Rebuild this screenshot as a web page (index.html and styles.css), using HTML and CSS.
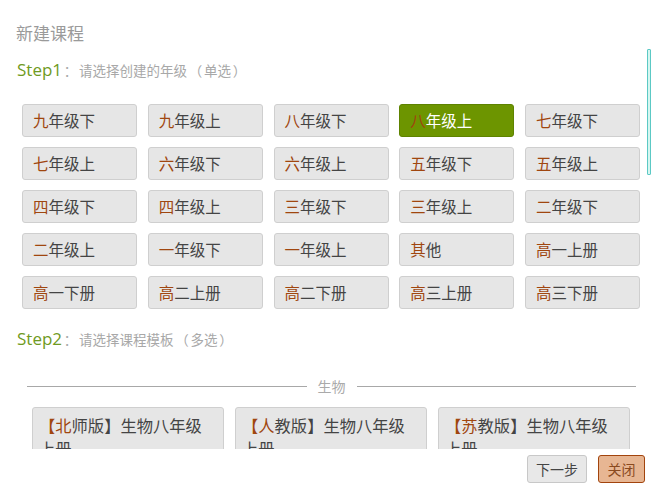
FILE: index.html
```html
<!DOCTYPE html>
<html lang="zh">
<head>
<meta charset="utf-8">
<title>新建课程</title>
<link rel="stylesheet" href="styles.css">
</head>
<body>
<div class="dialog">
  <div class="content">
    <div class="title">新建课程</div>
    <div class="step"><span class="step-no">Step1</span><span class="step-desc"><span class="pn">：</span>请选择创建的年级<span class="pn">（</span>单选<span class="pn">）</span></span></div>
    <div class="grades">
      <div class="grade">九年级下</div>
      <div class="grade">九年级上</div>
      <div class="grade">八年级下</div>
      <div class="grade selected">八年级上</div>
      <div class="grade">七年级下</div>
      <div class="grade">七年级上</div>
      <div class="grade">六年级下</div>
      <div class="grade">六年级上</div>
      <div class="grade">五年级下</div>
      <div class="grade">五年级上</div>
      <div class="grade">四年级下</div>
      <div class="grade">四年级上</div>
      <div class="grade">三年级下</div>
      <div class="grade">三年级上</div>
      <div class="grade">二年级下</div>
      <div class="grade">二年级上</div>
      <div class="grade">一年级下</div>
      <div class="grade">一年级上</div>
      <div class="grade">其他</div>
      <div class="grade">高一上册</div>
      <div class="grade">高一下册</div>
      <div class="grade">高二上册</div>
      <div class="grade">高二下册</div>
      <div class="grade">高三上册</div>
      <div class="grade">高三下册</div>
    </div>
    <div class="step step2"><span class="step-no">Step2</span><span class="step-desc"><span class="pn">：</span>请选择课程模板<span class="pn">（</span>多选<span class="pn">）</span></span></div>
    <div class="divider"><span class="divider-text">生物</span></div>
    <div class="cards">
      <div class="card">【北师版】生物八年级上册</div>
      <div class="card">【人教版】生物八年级上册</div>
      <div class="card">【苏教版】生物八年级上册</div>
    </div>
  </div>
  <div class="footer">
    <div class="btn">下一步</div>
    <div class="btn btn-close">关闭</div>
  </div>
  <div class="side-bar"></div>
</div>
</body>
</html>
```

FILE: styles.css
```css
* { box-sizing: border-box; }
html, body { margin: 0; padding: 0; background: #fff; }
body {
  font-family: "Noto Sans CJK SC", "Noto Sans", sans-serif;
  color: #333;
}
.dialog {
  position: relative;
  width: 668px;
  height: 491px;
}
.content {
  height: 449px;
  overflow: hidden;
  padding: 0 16px;
}
.title {
  padding-top: 21px;
  font-size: 17px;
  line-height: 24px;
  color: #9a9a9a;
}
.step {
  margin-top: 13px;
  height: 24px;
  line-height: 24px;
  padding-left: 1px;
  display: flex;
  align-items: baseline;
}
.step-no {
  font-family: "Open Sans", "Noto Sans", sans-serif;
  font-size: 17px;
  color: #6f9a22;
}
.step-desc {
  font-size: 13.5px;
  color: #a8a8a8;
}
.pn {
  display: inline-block;
  width: 17px;
  text-align: center;
}
.grades {
  margin-top: 22px;
  margin-left: 6px;
  display: grid;
  grid-template-columns: repeat(5, 115px);
  grid-auto-rows: 33px;
  column-gap: 10.75px;
  row-gap: 10px;
}
.grade {
  background: #e6e6e6;
  border: 1px solid #cfcfcf;
  border-radius: 3px;
  font-size: 15.5px;
  line-height: 31px;
  padding-left: 10px;
  color: #444;
}
.grade::first-letter { color: #a0460f; }
.grade.selected {
  background: #6d9500;
  border-color: #5e8300;
  color: #fff;
}
.step2 { margin-top: 18px; }
.divider {
  margin: 25px 16px 0 11px;
  height: 20px;
  display: flex;
  align-items: center;
  font-size: 14px;
  color: #aaa;
}
.divider::before, .divider::after {
  content: "";
  flex: 1;
  height: 1px;
  background: #a8a8a8;
}
.divider-text { padding: 0 11px 0 11px; line-height: 20px; }
.cards {
  margin-top: 11px;
  margin-left: 16px;
  display: flex;
  gap: 11px;
}
.card {
  width: 192px;
  height: 80px;
  background: #e6e6e6;
  border: 1px solid #cfcfcf;
  border-radius: 3px;
  padding: 6px 16px 0 6px;
  font-size: 16.3px;
  line-height: 23px;
  color: #444;
}
.card::first-letter { color: #a0460f; }
.footer {
  display: flex;
  justify-content: flex-end;
  gap: 11px;
  padding: 6px 23px 0 0;
}
.btn {
  height: 28px;
  width: 60px;
  background: #e8e8e8;
  border: 1px solid #c8c8c8;
  border-radius: 3px;
  font-size: 14px;
  line-height: 26px;
  text-align: center;
  color: #444;
}
.btn-close {
  width: 47px;
  background: #e7b693;
  border-color: #a2440d;
  color: #8a4a1f;
}
.side-bar {
  position: absolute;
  left: 647px;
  top: 49px;
  width: 4px;
  height: 126px;
  background: #d6f6f0;
  border: 1px solid #5cc9c5;
  border-radius: 1px;
}
```
